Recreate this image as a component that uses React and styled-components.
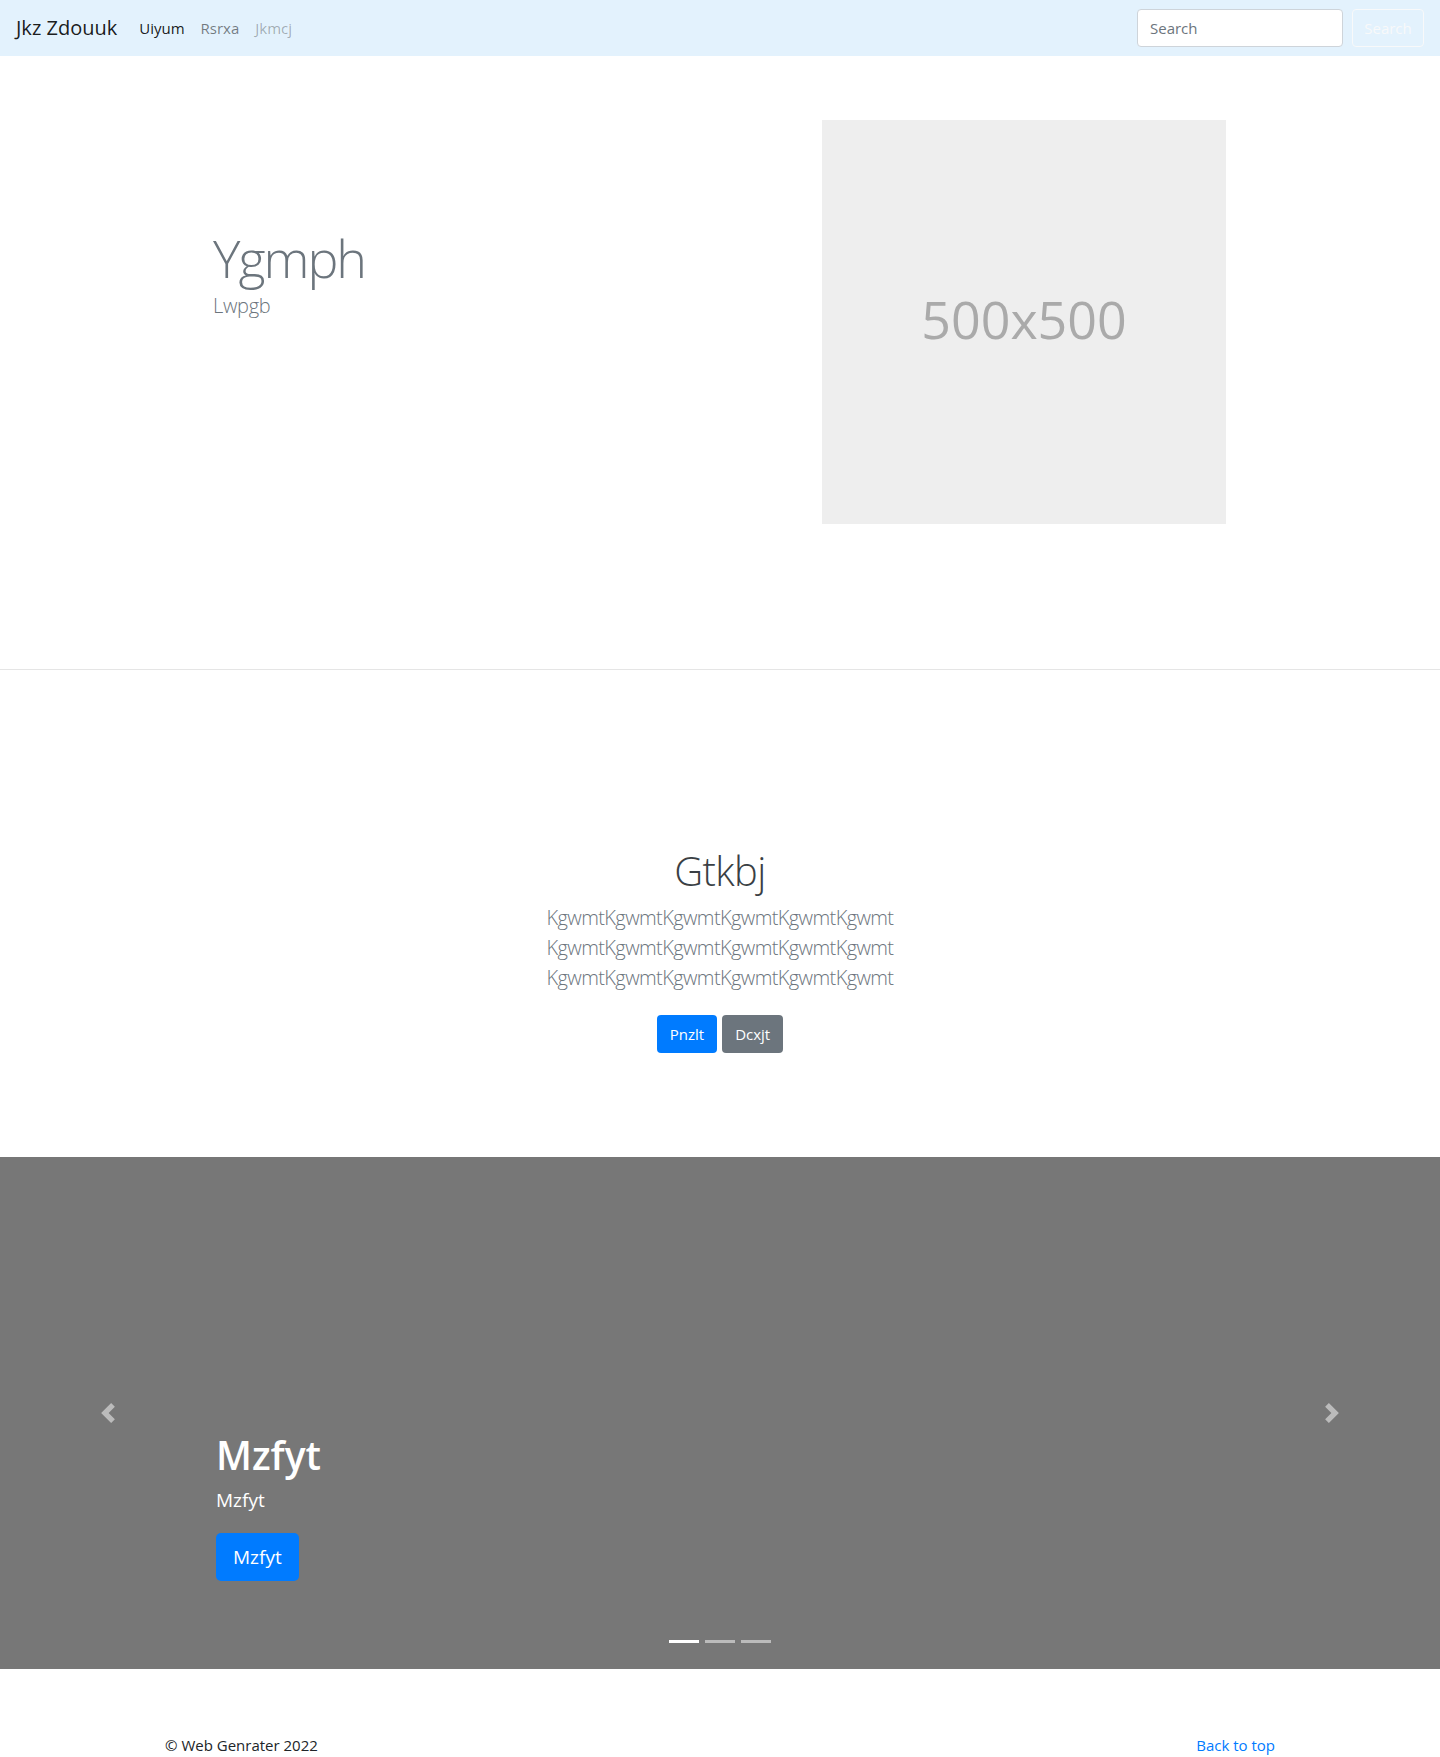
import React from "react";
import styled, { createGlobalStyle } from "styled-components";

const GlobalStyle = createGlobalStyle`
  * { box-sizing: border-box; }
  body {
    margin: 0;
    font-family: "Open Sans", "Noto Sans", Arial, sans-serif;
    font-size: 16px;
    line-height: 1.5;
    color: #212529;
    background: #fff;
  }
`;

const Navbar = styled.nav`
  height: 56px;
  padding: 8px 16px;
  display: flex;
  align-items: center;
  background-color: #e3f2fd;
`;

const Brand = styled.a`
  font-size: 20px;
  line-height: 30px;
  padding: 5px 0;
  margin-right: 14px;
  color: rgba(0, 0, 0, 0.9);
  text-decoration: none;
  white-space: nowrap;
`;

const NavList = styled.ul`
  display: flex;
  list-style: none;
  margin: 0;
  padding: 0;
  flex: 1;
`;

const NavLink = styled.a`
  display: block;
  padding: 8px;
  font-size: 15px;
  text-decoration: none;
  color: ${(p) =>
    p.$active ? "rgba(0,0,0,0.9)" : p.$disabled ? "rgba(0,0,0,0.3)" : "rgba(0,0,0,0.5)"};
`;

const SearchForm = styled.form`
  display: flex;
  align-items: center;
  gap: 9px;
`;

const SearchInput = styled.input`
  width: 206px;
  height: 38px;
  padding: 6px 12px;
  font-family: inherit;
  font-size: 15px;
  color: #495057;
  background: #fff;
  border: 1px solid #ced4da;
  border-radius: 4px;
  &::placeholder { color: #6c757d; }
`;

const OutlineButton = styled.button`
  height: 38px;
  width: 72px;
  font-family: inherit;
  font-size: 15px;
  color: #f8f9fa;
  background: transparent;
  border: 1px solid #f8f9fa;
  border-radius: 4px;
`;

const Hero = styled.section`
  width: 1140px;
  margin: 0 auto;
  height: 613px;
  padding: 64px 64px 0 63px;
  display: grid;
  grid-template-columns: 1fr 404px;
  align-items: start;
`;

const HeroText = styled.div`
  margin-top: 107px;
`;

const HeroTitle = styled.h1`
  margin: 0;
  font-size: 52px;
  font-weight: 300;
  line-height: 1.2;
  color: #6c757d;
  letter-spacing: -2px;
`;

const HeroSub = styled.p`
  margin: 2px 0 0;
  font-size: 20px;
  font-weight: 300;
  line-height: 30px;
  color: #6c757d;
  letter-spacing: -0.3px;
`;

const Placeholder = styled.div`
  width: 404px;
  height: 404px;
  padding-bottom: 6px;
  background: #eeeeee;
  display: flex;
  align-items: center;
  justify-content: center;
  font-size: 52px;
  color: #aaaaaa;
`;

const Intro = styled.section`
  border-top: 1px solid #e5e5e5;
  padding: 177px 0 104px;
  text-align: center;
`;

const IntroTitle = styled.h1`
  margin: 0 0 8px;
  font-size: 40px;
  font-weight: 300;
  line-height: 48px;
  color: #3a3f44;
  letter-spacing: -0.6px;
`;

const Lead = styled.p`
  margin: 0 0 22px;
  font-size: 20px;
  font-weight: 300;
  line-height: 30px;
  color: #6c757d;
  letter-spacing: -0.6px;
`;

const LeadLine = styled.span`
  display: block;
`;

const ButtonRow = styled.div`
  display: flex;
  justify-content: center;
  gap: 5px;
`;

const Button = styled.a`
  display: inline-block;
  padding: ${(p) => (p.$large ? "8px 16px" : "6px 12px")};
  font-size: ${(p) => (p.$large ? "19px" : "15px")};
  line-height: ${(p) => (p.$large ? "30px" : "24px")};
  border-radius: ${(p) => (p.$large ? "5px" : "4px")};
  border: 1px solid transparent;
  color: #fff;
  text-decoration: none;
  background: ${(p) => (p.$variant === "secondary" ? "#6c757d" : "#007bff")};
`;

const Carousel = styled.div`
  position: relative;
  height: 512px;
  margin-bottom: 64px;
  background: #777;
  display: flex;
  flex-direction: column;
  justify-content: flex-end;
  padding: 0 15% 88px;
  color: #fff;
`;

const CaptionTitle = styled.h1`
  margin: 0 0 6px;
  font-size: 39px;
  font-weight: 600;
  line-height: 48px;
`;

const CaptionText = styled.p`
  margin: 0 0 18px;
  font-size: 19px;
  line-height: 30px;
`;

const Control = styled.a`
  position: absolute;
  top: 0;
  bottom: 0;
  ${(p) => (p.$side === "prev" ? "left: 0;" : "right: 0;")}
  width: 15%;
  display: flex;
  align-items: center;
  justify-content: center;
  opacity: 0.5;
  color: #fff;
`;

const Indicators = styled.ol`
  position: absolute;
  left: 0;
  right: 0;
  bottom: 26px;
  display: flex;
  justify-content: center;
  gap: 6px;
  list-style: none;
  margin: 0;
  padding: 0;
`;

const Indicator = styled.li`
  width: 30px;
  height: 3px;
  background: ${(p) => (p.$active ? "#fff" : "rgba(255,255,255,0.5)")};
`;

const Footer = styled.footer`
  width: 1140px;
  margin: 0 auto;
  padding: 0 15px;
  display: flex;
  justify-content: space-between;
  font-size: 15px;
  line-height: 24px;
  color: #212529;
`;

const FooterText = styled.p`
  margin: 0 0 16px;
`;

const FooterLink = styled.a`
  color: #007bff;
  text-decoration: none;
`;

const Chevron = ({ dir }) => (
  <svg width="20" height="20" viewBox="0 0 8 8" fill="currentColor">
    {dir === "prev" ? (
      <path d="M5.25 0l-4 4 4 4 1.5-1.5-2.5-2.5 2.5-2.5-1.5-1.5z" />
    ) : (
      <path d="M2.75 0l-1.5 1.5 2.5 2.5-2.5 2.5 1.5 1.5 4-4-4-4z" />
    )}
  </svg>
);

const leadLines = [
  "KgwmtKgwmtKgwmtKgwmtKgwmtKgwmt",
  "KgwmtKgwmtKgwmtKgwmtKgwmtKgwmt",
  "KgwmtKgwmtKgwmtKgwmtKgwmtKgwmt",
];

export default function App() {
  return (
    <>
      <GlobalStyle />
      <Navbar>
        <Brand href="#">Jkz Zdouuk</Brand>
        <NavList>
          <li><NavLink href="#" $active>Uiyum</NavLink></li>
          <li><NavLink href="#">Rsrxa</NavLink></li>
          <li><NavLink href="#" $disabled>Jkmcj</NavLink></li>
        </NavList>
        <SearchForm onSubmit={(e) => e.preventDefault()}>
          <SearchInput type="search" placeholder="Search" />
          <OutlineButton type="submit">Search</OutlineButton>
        </SearchForm>
      </Navbar>

      <Hero>
        <HeroText>
          <HeroTitle>Ygmph</HeroTitle>
          <HeroSub>Lwpgb</HeroSub>
        </HeroText>
        <Placeholder>500x500</Placeholder>
      </Hero>

      <Intro>
        <IntroTitle>Gtkbj</IntroTitle>
        <Lead>
          {leadLines.map((line, i) => (
            <LeadLine key={i}>{line}</LeadLine>
          ))}
        </Lead>
        <ButtonRow>
          <Button href="#">Pnzlt</Button>
          <Button href="#" $variant="secondary">Dcxjt</Button>
        </ButtonRow>
      </Intro>

      <Carousel>
        <CaptionTitle>Mzfyt</CaptionTitle>
        <CaptionText>Mzfyt</CaptionText>
        <div>
          <Button href="#" $large>Mzfyt</Button>
        </div>
        <Control href="#" $side="prev"><Chevron dir="prev" /></Control>
        <Control href="#" $side="next"><Chevron dir="next" /></Control>
        <Indicators>
          <Indicator $active />
          <Indicator />
          <Indicator />
        </Indicators>
      </Carousel>

      <Footer>
        <FooterText>© Web Genrater 2022</FooterText>
        <FooterText>
          <FooterLink href="#">Back to top</FooterLink>
        </FooterText>
      </Footer>
    </>
  );
}
